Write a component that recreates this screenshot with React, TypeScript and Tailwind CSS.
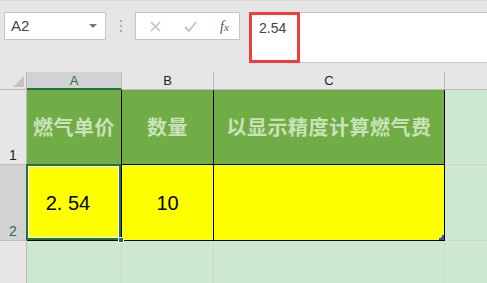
import React from "react"

const UI = { fontFamily: '"Liberation Sans", Arial, sans-serif' }
const CJK = { fontFamily: '"Noto Sans CJK SC", "Liberation Sans", sans-serif' }

function Toolbar() {
  return (
    <div className="flex h-[72px] items-start border-t border-[#d6d6d6] bg-[#e6e6e6] pt-[11px]" style={UI}>
      <div className="ml-[4px] flex h-[28px] w-[102px] items-center justify-between border border-[#c6c6c6] bg-white pl-[6px] pr-[6px]">
        <span className="text-[15px] text-[#444]">A2</span>
        <svg width="8" height="5" viewBox="0 0 8 5" className="mr-[2px]">
          <path d="M0 0h8L4 4z" fill="#777" />
        </svg>
      </div>
      <div className="ml-[14px] mt-[8px] flex flex-col gap-[3px]">
        <span className="h-[2px] w-[2px] bg-[#aaa]" />
        <span className="h-[2px] w-[2px] bg-[#aaa]" />
        <span className="h-[2px] w-[2px] bg-[#aaa]" />
      </div>
      <div className="ml-[13px] flex h-[28px] w-[105px] items-center border border-[#c6c6c6] bg-white">
        <svg width="11" height="11" viewBox="0 0 11 11" className="ml-[14px]">
          <path d="M1 1l9 9M10 1l-9 9" stroke="#c2c2c2" strokeWidth="1.6" />
        </svg>
        <svg width="13" height="11" viewBox="0 0 13 11" className="ml-[23px]">
          <path d="M1 6l4 4 7-9" stroke="#c2c2c2" strokeWidth="1.8" fill="none" />
        </svg>
        <span className="ml-[23px] text-[14px] italic text-[#555]" style={{ fontFamily: '"Liberation Serif", serif' }}>
          f<span className="text-[11px]">x</span>
        </span>
      </div>
      <div className="ml-[9px] flex h-[51px] flex-1 border-y border-[#c6c6c6] bg-white">
        <div className="h-[51px] w-[51px] border-[3px] border-[#f23b3b] -mt-[1px] pl-[7px] pt-[3px] text-[14px] text-[#444]">
          2.54
        </div>
      </div>
    </div>
  )
}

function ColHeaders() {
  return (
    <div className="grid h-[18px] grid-cols-[27px_95px_92px_231px_42px] bg-[#e6e6e6] text-[13px] leading-none" style={UI}>
      <div className="flex items-end justify-end border-r border-b border-[#bababa] pb-[2px] pr-[2px]">
        <svg width="11" height="11" viewBox="0 0 11 11">
          <path d="M11 0v11H0z" fill="#c2c2c2" />
        </svg>
      </div>
      <div className="flex items-center justify-center border-r border-[#bababa] border-b-2 border-b-[#217346] bg-[#d2d2d2] text-[#217346]">A</div>
      <div className="flex items-center justify-center border-r border-b border-[#bababa] text-[#222]">B</div>
      <div className="flex items-center justify-center border-r border-b border-[#bababa] text-[#222]">C</div>
      <div className="border-b border-[#bababa]" />
    </div>
  )
}

function RowHead({ n, active }: { n: number; active?: boolean }) {
  return (
    <div
      className={`flex items-end justify-center border-r border-b border-[#bababa] pb-[2px] text-[14px] leading-none ${
        active ? "bg-[#d2d2d2] text-[#217346]" : "bg-[#e6e6e6] text-[#222]"
      }`}
      style={UI}
    >
      {n}
    </div>
  )
}

export default function App() {
  const head = "flex items-center justify-center border-r border-b border-black bg-[#70ad47] text-[20px] font-bold tracking-[0.5px] text-[#c9e2b8]"
  const val = "flex items-center justify-center border-r border-b border-black bg-[#ffff00] text-[20px] text-black"
  return (
    <div className="h-[283px] w-[487px] overflow-hidden bg-[#cce8cf]">
      <Toolbar />
      <ColHeaders />
      <div className="grid h-[75px] grid-cols-[27px_95px_92px_231px_42px]">
        <RowHead n={1} />
        <div className={head} style={CJK}>燃气单价</div>
        <div className={head} style={CJK}>数量</div>
        <div className={head} style={CJK}>以显示精度计算燃气费</div>
        <div className="border-b border-[#d4d4d4]" />
      </div>
      <div className="grid h-[76px] grid-cols-[27px_95px_92px_231px_42px]">
        <RowHead n={2} active />
        <div className={`relative pr-[12px] ${val}`} style={UI}>
          2. 54
          <div className="absolute -left-[1px] -top-[1px] right-0 bottom-0 border-2 border-[#217346]">
            <div className="absolute inset-0 border border-white" />
          </div>
          <div className="absolute -bottom-[3px] -right-[3px] h-[6px] w-[6px] border border-white bg-[#217346]" />
        </div>
        <div className={val} style={UI}>10</div>
        <div className={`relative ${val}`}>
          <svg width="5" height="5" viewBox="0 0 5 5" className="absolute bottom-0 right-0">
            <path d="M5 0v5H0v-2h2V2h1V0z" fill="#3f48cc" />
          </svg>
        </div>
        <div className="border-b border-[#d4d4d4]" />
      </div>
      <div className="grid h-[50px] grid-cols-[27px_95px_92px_231px_42px]">
        <div className="border-r border-[#bababa] bg-[#e6e6e6]" />
        <div className="border-r border-[#d4d4d4]" />
        <div className="border-r border-[#d4d4d4]" />
        <div className="border-r border-[#d4d4d4]" />
        <div />
      </div>
    </div>
  )
}
